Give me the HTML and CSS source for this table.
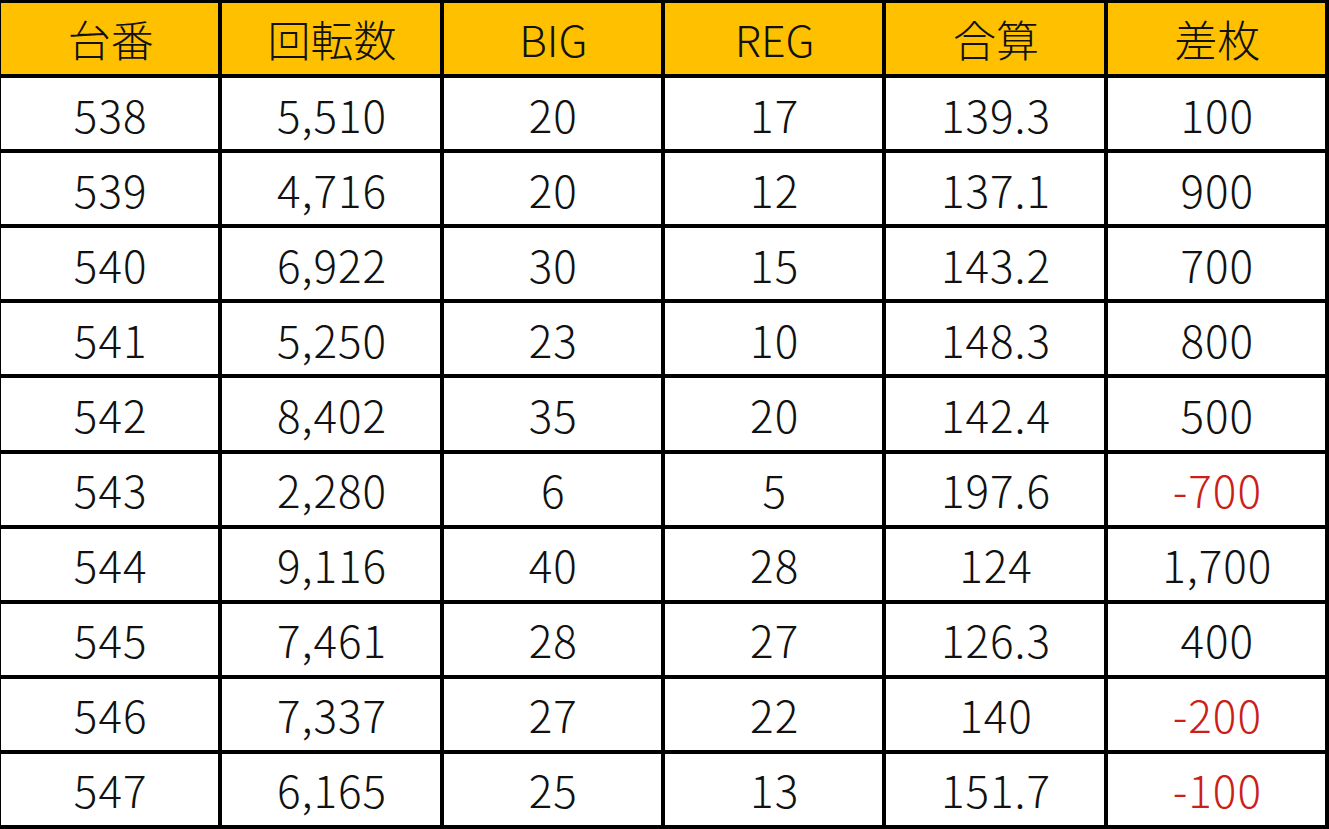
FILE: index.html
```html
<!DOCTYPE html>
<html lang="ja">
<head>
<meta charset="utf-8">
<title>台番データ</title>
<link rel="stylesheet" href="styles.css">
</head>
<body>
<div class="table">
  <div class="cell head">台番</div><div class="cell head">回転数</div><div class="cell head">BIG</div><div class="cell head">REG</div><div class="cell head">合算</div><div class="cell head">差枚</div>
  <div class="cell">538</div><div class="cell">5,510</div><div class="cell">20</div><div class="cell">17</div><div class="cell">139.3</div><div class="cell">100</div>
  <div class="cell">539</div><div class="cell">4,716</div><div class="cell">20</div><div class="cell">12</div><div class="cell">137.1</div><div class="cell">900</div>
  <div class="cell">540</div><div class="cell">6,922</div><div class="cell">30</div><div class="cell">15</div><div class="cell">143.2</div><div class="cell">700</div>
  <div class="cell">541</div><div class="cell">5,250</div><div class="cell">23</div><div class="cell">10</div><div class="cell">148.3</div><div class="cell">800</div>
  <div class="cell">542</div><div class="cell">8,402</div><div class="cell">35</div><div class="cell">20</div><div class="cell">142.4</div><div class="cell">500</div>
  <div class="cell">543</div><div class="cell">2,280</div><div class="cell">6</div><div class="cell">5</div><div class="cell">197.6</div><div class="cell neg">-700</div>
  <div class="cell">544</div><div class="cell">9,116</div><div class="cell">40</div><div class="cell">28</div><div class="cell">124</div><div class="cell">1,700</div>
  <div class="cell">545</div><div class="cell">7,461</div><div class="cell">28</div><div class="cell">27</div><div class="cell">126.3</div><div class="cell">400</div>
  <div class="cell">546</div><div class="cell">7,337</div><div class="cell">27</div><div class="cell">22</div><div class="cell">140</div><div class="cell neg">-200</div>
  <div class="cell">547</div><div class="cell">6,165</div><div class="cell">25</div><div class="cell">13</div><div class="cell">151.7</div><div class="cell neg">-100</div>
</div>
</body>
</html>
```
FILE: styles.css
```css
html, body {
  margin: 0;
  padding: 0;
  background: #ffffff;
}
.table {
  width: 1329px;
  height: 829px;
  box-sizing: border-box;
  display: grid;
  grid-template-columns: repeat(6, 1fr);
  grid-template-rows: repeat(11, 1fr);
  gap: 4px;
  padding: 3px 4px 4px 1px;
  background: #000000;
  font-family: "Noto Sans CJK JP", "Noto Sans", sans-serif;
  font-weight: 200;
  font-size: 44px;
  letter-spacing: 1px;
  color: #111111;
}
.cell {
  background: #ffffff;
  display: flex;
  align-items: center;
  justify-content: center;
  line-height: 1;
  padding-left: 2px;
}
.head {
  background: #ffc000;
  font-size: 43px;
  letter-spacing: 0;
}
.neg {
  color: #cc1f1a;
}
```
